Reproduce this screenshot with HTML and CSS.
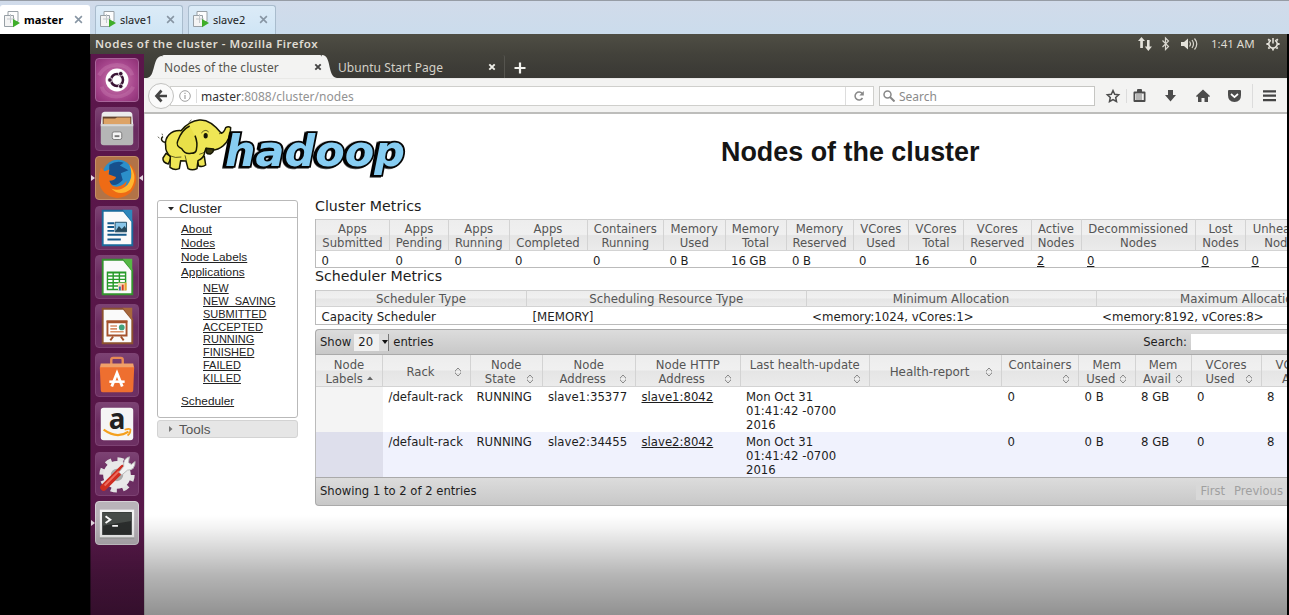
FILE: index.html
```
<!DOCTYPE html>
<html lang="en">
<head>
<meta charset="utf-8">
<title>Nodes of the cluster</title>
<link rel="stylesheet" href="styles.css">
</head>
<body>
<svg class="defs" width="0" height="0">
  <symbol id="vm" viewBox="0 0 18 18"><path d="M5 1.5h10v10H5z" fill="#fdfdfd" stroke="#98a0a6"/><path d="M1.5 5.500h9v11h-9z" fill="#f4f4f4" stroke="#98a0a6"/><path d="M4 9h8M7.500 4v9" stroke="#c3c8cc" fill="none"/><path d="M10 9l7 4-7 4.300z" fill="#3fae2a"/></symbol>
  <symbol id="x" viewBox="0 0 8 8"><path d="M1 1l6 6M7 1L1 7" fill="none" stroke="currentColor" stroke-width="1.400"/></symbol>
  <symbol id="xb" viewBox="0 0 8 8"><path d="M1.300 1.300l5.400 5.400M6.700 1.300L1.300 6.700" fill="none" stroke="currentColor" stroke-width="1.900"/></symbol>
  <symbol id="sort" viewBox="0 0 8 10"><path d="M1.300 4L4 1l2.700 3zM1.300 6L4 9l2.700-3z" fill="#f4f4f4" stroke="#777" stroke-width=".9"/><path d="M2 3.300h4v3.400H2z" fill="#f0f0f0"/></symbol>
</svg>
<div class="vmtabs">
  <div class="vmtab active"><svg class="vmi"><use href="#vm"/></svg><span>master</span><svg class="vmx"><use href="#x"/></svg></div>
  <div class="vmtab second"><svg class="vmi"><use href="#vm"/></svg><span>slave1</span><svg class="vmx"><use href="#x"/></svg></div>
  <div class="vmtab third"><svg class="vmi"><use href="#vm"/></svg><span>slave2</span><svg class="vmx"><use href="#x"/></svg></div>
</div>
<div class="screen">
  <div class="desktop">
    <header class="panel">
      <span class="wintitle">Nodes of the cluster - Mozilla Firefox</span>
      <svg class="tray" width="60" height="18" viewBox="0 0 60 18" fill="#e4e2da"><path d="M3.500 2L7 6H4.900v7H2.200V6H0zM9 5h2.600v6.500H14L10.300 16 6.800 11.500H9z"/><path d="M24.500 5.500l6 6-3 3V3l3 3-6 6" fill="none" stroke="#d8d6ce" stroke-width="1.200"/><path d="M43 7h3l4-3.500v11L46 11h-3z"/><path d="M51.500 6.500q2 2.500 0 5M54 5q3 4 0 8M56.500 3.500q4.500 5.500 0 11" fill="none" stroke="#d8d6ce" stroke-width="1.200"/></svg>
      <span class="clock">1:41 AM</span>
      <svg class="gear" width="14" height="14" viewBox="0 0 14 14" fill="none" stroke="#e4e2da"><path d="M4.900 3.300a4.200 4.200 0 1 0 4.200 0" stroke-width="1.600"/><path d="M7 1v5.500" stroke-width="1.500"/><path d="M2.200 2.200l1.300 1.300M11.800 2.200l-1.300 1.300M.4 7h2M11.600 7h2M2.300 11.700l1.200-1.200M11.700 11.700l-1.200-1.200M7 11.500v2" stroke-width="1.800"/></svg>
    </header>
    <div class="work">
      <nav class="launcher">
        <div class="tile dash"><svg viewBox="0 0 44 44"><path d="M3 17C12 2 34 3 38 17M39 29C33 43 9 43 6 29" stroke="#d18bb9" stroke-width="4" fill="none" opacity=".3"/><circle cx="22" cy="22" r="12" fill="#fff"/><circle cx="22" cy="22" r="6.300" fill="none" stroke="#3b1435" stroke-width="2.600"/><g stroke="#fff" fill="#3b1435" stroke-width=".8"><circle cx="14.600" cy="22" r="2.400"/><circle cx="25.900" cy="15.400" r="2.400"/><circle cx="25.900" cy="28.600" r="2.400"/></g></svg></div>
        <div class="tile"><svg viewBox="0 0 44 44"><path d="M6 6q1-2 3-2h26q2 0 3 2l1 12H5z" fill="#ececec"/><path d="M7 9h30v8H7z" fill="#61412c"/><path d="M8 11h12l2-1h14v9H8z" fill="#dda366"/><path d="M5 17h34v19q0 3-3 3H8q-3 0-3-3z" fill="#b5b6b6"/><path d="M5 17h34v2H5z" fill="#d8d8d8"/><rect x="17" y="25" width="10" height="8" rx="2" fill="#f4f4f4" stroke="#777"/><path d="M19.500 29.500h5" stroke="#777" stroke-width="2"/></svg></div>
        <div class="tile firefox"><svg viewBox="0 0 44 44"><circle cx="23" cy="19" r="16" fill="#2b8fca"/><path d="M14 8q8-5 15-2l-4 3 9 5-8 3 2 7q-8 9-15 3z" fill="#17508d"/><path d="M5 11l4 4 5-2-1 5 8 3q-1 4-7 4 2 7 9 6 6-1 9-6 0 5-3 7 8-3 8-13 1-8-3-13 9 7 8 19-3 17-20 18Q5 41 3 25q0-8 2-14z" fill="#ee6b15"/><path d="M35 8q5 12-2 21-8 8-17 4 9 9 20 1 9-13-1-26z" fill="#ffb52f"/></svg><i class="dot"></i><i class="dot right"></i></div>
        <div class="tile"><svg viewBox="0 0 44 44"><path d="M7 4h22l9 11v25H7z" fill="#fafafa" stroke="#1a6a9c" stroke-width="2"/><path d="M28 3h10v13z" fill="#2e87bb"/><path d="M12 17h7M12 21h7M12 25h7M12 29h20M12 34h14" stroke="#15598a" stroke-width="2"/><path d="M20 16h12v10H20z" fill="#88c5e8" stroke="#234d65"/><path d="M20 26l4-6 3 3 3-3 2 3v3z" fill="#26485a"/></svg></div>
        <div class="tile"><svg viewBox="0 0 44 44"><path d="M7 4h22l9 11v25H7z" fill="#fafafa" stroke="#34932e" stroke-width="2"/><path d="M28 3h10v13z" fill="#56b745"/><path d="M12 17h19v18H12z" fill="#fff" stroke="#279a2a" stroke-width="1.500"/><path d="M12 17.500h19M12 21h19M12 24.500h19M12 28h19M12 31.500h19M18 17v18M24.500 17v18" fill="none" stroke="#279a2a" stroke-width="1.500"/><path d="M23 28h9v8h-9z" fill="#f8d9b5"/><path d="M24 32h2v4h-2z" fill="#336fb5"/><path d="M27 30h2v6h-2z" fill="#d43d28"/><path d="M30 28h2v8h-2z" fill="#e9a12e"/></svg></div>
        <div class="tile"><svg viewBox="0 0 44 44"><path d="M7 4h22l9 11v25H7z" fill="#fafafa" stroke="#8c512f" stroke-width="2"/><path d="M28 3h10v13z" fill="#a7683c"/><path d="M12 18h20v14H12z" fill="#fff" stroke="#a5522d" stroke-width="2"/><path d="M15 22h7M15 25h7M15 28h14" stroke="#d89068" stroke-width="1.600"/><circle cx="27" cy="23.500" r="3" fill="#45a37d"/><path d="M18 33l-3 4M26 33l3 4M11 17h22" stroke="#a5522d" stroke-width="2"/></svg></div>
        <div class="tile"><svg viewBox="0 0 44 44"><path d="M16 11V6q0-2 2-2h8q2 0 2 2v5" fill="none" stroke="#e88a55" stroke-width="2.500"/><path d="M5 10h34l1 5H4z" fill="#f0a06a"/><path d="M4 14h36l-1 24q0 2-2 2H7q-2 0-2-2z" fill="#ee6f30"/><path d="M16.500 34L22 20l5.500 14" fill="none" stroke="#fff" stroke-width="3"/><path d="M14 29h16" stroke="#fff" stroke-width="2.600"/></svg></div>
        <div class="tile"><svg viewBox="0 0 44 44"><rect x="5" y="5" width="34" height="34" rx="3" fill="#f5f5f5"/><text x="22" y="27" class="amz">a</text><path d="M8 28q14 10 26 2" fill="none" stroke="#f4a01e" stroke-width="2.300"/><path d="M30 28q7-2 6 1 0 3-3 5" fill="none" stroke="#f4a01e" stroke-width="1.800"/></svg></div>
        <div class="tile"><svg viewBox="0 0 44 44"><circle cx="22" cy="23" r="16" fill="none" stroke="#e2e2e2" stroke-width="5" stroke-dasharray="6.300 6.266"/><circle cx="22" cy="23" r="10.500" fill="#aaa" stroke="#e9e9e9" stroke-width="8"/><path d="M8 36L28 16" stroke="#cf2d20" stroke-width="7" stroke-linecap="round"/><path d="M9 34L24 19" stroke="#ef6c5e" stroke-width="2"/><path d="M24 20l5-6q-1-8 6-10l-1 6 3 2 4-3q0 9-8 9l-6 5z" fill="#f2f2f2" stroke="#b8b8b8"/></svg></div>
        <div class="tile term"><svg viewBox="0 0 44 44"><rect x="4" y="9" width="36" height="30" fill="#a6a6a6"/><rect x="4" y="8" width="36" height="29" fill="#f3f3f3"/><rect x="6.500" y="10.500" width="31" height="24" fill="#2b2e2d"/><path d="M7 11h30v9L7 25z" fill="#474c49"/><path d="M10 15l5 3.500-5 3.500M17 25h6" fill="none" stroke="#fff" stroke-width="2"/></svg><i class="dot"></i></div>
      </nav>
      <main class="browser">
        <div class="fxtabs">
          <svg class="curve" width="15" height="23" viewBox="0 0 15 23"><path d="M0 23C9 22 5 1 15 1v22z" fill="#f3f3f2"/></svg>
          <div class="fxtab"><span>Nodes of the cluster</span><svg class="close"><use href="#xb"/></svg></div>
          <svg class="curve" width="15" height="23" viewBox="0 0 15 23"><path d="M0 0C10 0 5 22 15 23H0z" fill="#f3f3f2"/></svg>
          <div class="fxtab idle"><span>Ubuntu Start Page</span><svg class="close"><use href="#xb"/></svg></div>
          <svg class="plus" width="12" height="12" viewBox="0 0 12 12"><path d="M6 .5v11M.5 6h11" stroke="#f2f2ee" stroke-width="2.200"/></svg>
        </div>
        <div class="toolbar">
          <div class="back"><svg width="14" height="14" viewBox="0 0 14 14"><path d="M7.500 1.500L2.500 7l5 5.500M3 7h10" fill="none" stroke="#444" stroke-width="2.700"/></svg></div>
          <div class="url"><svg class="info" width="12" height="12" viewBox="0 0 12 12" fill="none" stroke="#a0a0a0"><circle cx="6" cy="6" r="5.300"/><path d="M6 5v4M6 2.800v1.200" stroke-width="1.200"/></svg><i class="sep"></i><span><b>master</b>:8088/cluster/nodes</span><i class="sep reloadsep"></i><svg class="reload" width="12" height="12" viewBox="0 0 12 12"><path d="M9.200 3.500A4 4 0 1 0 9.500 8" fill="none" stroke="#888" stroke-width="1.500"/><path d="M10.800 1v4.500H6.300z" fill="#888"/></svg></div>
          <div class="search"><svg width="12" height="12" viewBox="0 0 12 12" fill="none" stroke="#888" stroke-width="1.500"><circle cx="4.500" cy="4.500" r="3.500"/><path d="M7 7l4.500 4.500" stroke-width="2"/></svg><span>Search</span></div>
          <svg class="tools" width="176" height="28" viewBox="0 0 176 28" fill="#4c4c4c"><path d="M13 8.500l1.700 3.700 4 .5-3 2.800.8 4-3.500-2-3.500 2 .8-4-3-2.800 4-.5z" fill="none" stroke="#4c4c4c" stroke-width="1.500"/><path d="M26.500 7v14M152.500 2v24" stroke="#dcdcdc"/><path d="M34.500 9.500H37V8q0-1 1-1h3q1 0 1 1v1.500h2.500q1 0 1 1V19q0 1-1 1h-10q-1 0-1-1v-8.500q0-1 1-1zm.7 2V18h8.600v-6.500z"/><path d="M37 12v6M39 12v6M41 12v6" stroke="#777"/><path d="M68 8h5v5h3l-5.500 6.500L65 13h3z"/><path d="M103 7.500l7 6.500-1 1.200-1-.9V20h-3.500v-4h-3v4H98v-5.700l-1 .9-1-1.200z"/><path d="M128 9q0-1 1-1h11q1 0 1 1v4q0 7-6.500 7T128 13z"/><path d="M131 12l3.500 3.200L138 12" fill="none" stroke="#fff" stroke-width="1.700"/><path d="M163 9.300h13M163 13.700h13M163 18.100h13" stroke="#444" stroke-width="2.200"/></svg>
        </div>
        <div class="page">
          <div class="banner">
            <svg class="logo" width="280" height="77" viewBox="0 9 840 231">
              <g stroke="#171704" stroke-width="4.500" stroke-linejoin="round" fill="#efe655">
                <path d="M66 102C52 106 44 92 54 86" fill="none"/>
                <path d="M63 136L54 150q-2 13 16 18l9-21zM155 150l6 24q12 4 21-3l-4-26z"/>
                <path d="M108 68C77 66 58 87 62 113c-1 14 5 24 14 32l-1 33q14 10 28 4l4-24 16 1 6 23q13 7 27 0l3-24q18-8 20-25l4-12q25 14 52-8 22-20 22-54-7-5-15 0-5 14-13 17C205 45 185 34 163 36c-23 2-39 13-55 32z"/>
                <path d="M134 54c-19 9-30 28-36 45-5 13 2 18 12 23q10 18 28 14 14 0 16-10 5-22-4-43" fill="#e9df48"/>
                <path d="M184 121q-5 18 12 17 10-5 10-15z" fill="#3d3b12"/>
                <ellipse cx="182" cy="83" rx="4" ry="6" fill="#111"/><path d="M169 75q12-14 22-3M222 78l9-6M132 44l7-9M43 91l-4-5M53 82l-2-5" fill="none" stroke-width="2"/>
                <path d="M77 144q13 7 32 3M124 158l-4-16M163 139q14-2 20-13" fill="none" stroke-width="2"/>
              </g>
              <text class="word" x="240" y="173" textLength="540" lengthAdjust="spacingAndGlyphs">hadoop</text>
            </svg>
            <h1>Nodes of the cluster</h1>
          </div>
          <div class="cols">
            <aside>
              <div class="box">
                <h3><svg width="6" height="4" viewBox="0 0 6 4"><path d="M0 0h6L3 3.500z" fill="#222"/></svg>Cluster</h3>
                <ul>
                  <li><a>About</a></li><li><a>Nodes</a></li><li><a>Node Labels</a></li><li><a>Applications</a></li>
                  <li><ul class="states"><li><a>NEW</a></li><li><a>NEW_SAVING</a></li><li><a>SUBMITTED</a></li><li><a>ACCEPTED</a></li><li><a>RUNNING</a></li><li><a>FINISHED</a></li><li><a>FAILED</a></li><li><a>KILLED</a></li></ul></li>
                  <li><a>Scheduler</a></li>
                </ul>
              </div>
              <div class="box closed"><h3><svg width="6" height="6" viewBox="0 0 6 6"><path d="M1 0v6l3.500-3z" fill="#777"/></svg>Tools</h3></div>
            </aside>
            <section class="content">
              <h2>Cluster Metrics</h2>
              <div class="grid metrics">
                <div class="th">Apps<br>Submitted</div><div class="th">Apps<br>Pending</div><div class="th">Apps<br>Running</div><div class="th">Apps<br>Completed</div><div class="th">Containers<br>Running</div><div class="th">Memory<br>Used</div><div class="th">Memory<br>Total</div><div class="th">Memory<br>Reserved</div><div class="th">VCores<br>Used</div><div class="th">VCores<br>Total</div><div class="th">VCores<br>Reserved</div><div class="th">Active<br>Nodes</div><div class="th">Decommissioned<br>Nodes</div><div class="th">Lost<br>Nodes</div><div class="th">Unhealthy<br>Nodes</div>
                <div class="td">0</div><div class="td">0</div><div class="td">0</div><div class="td">0</div><div class="td">0</div><div class="td">0 B</div><div class="td">16 GB</div><div class="td">0 B</div><div class="td">0</div><div class="td">16</div><div class="td">0</div><div class="td"><a>2</a></div><div class="td"><a>0</a></div><div class="td"><a>0</a></div><div class="td"><a>0</a></div>
              </div>
              <h2 class="sched">Scheduler Metrics</h2>
              <div class="grid scheduler">
                <div class="th">Scheduler Type</div><div class="th">Scheduling Resource Type</div><div class="th">Minimum Allocation</div><div class="th">Maximum Allocation</div>
                <div class="td">Capacity Scheduler</div><div class="td">[MEMORY]</div><div class="td">&lt;memory:1024, vCores:1&gt;</div><div class="td">&lt;memory:8192, vCores:8&gt;</div>
              </div>
              <div class="bar top"><span>Show</span><span class="select">20<i></i></span><span>entries</span><span class="find">Search:</span><span class="field"></span></div>
              <div class="grid nodes">
                <div class="th"><span>Node<br>Labels <svg class="up" viewBox="0 0 6 4"><path d="M0 4h6L3 .5z" fill="#666"/></svg></span></div>
                <div class="th"><span class="off">Rack</span><svg class="sort mid"><use href="#sort"/></svg></div>
                <div class="th"><span>Node<br><span class="off">State</span></span><svg class="sort"><use href="#sort"/></svg></div>
                <div class="th"><span>Node<br><span class="off">Address</span></span><svg class="sort"><use href="#sort"/></svg></div>
                <div class="th"><span>Node HTTP<br><span class="off">Address</span></span><svg class="sort"><use href="#sort"/></svg></div>
                <div class="th"><span>Last health-update<br>&nbsp;</span><svg class="sort"><use href="#sort"/></svg></div>
                <div class="th"><span class="off report">Health-report</span><svg class="sort mid"><use href="#sort"/></svg></div>
                <div class="th"><span>Containers<br>&nbsp;</span><svg class="sort"><use href="#sort"/></svg></div>
                <div class="th"><span>Mem<br><span class="off">Used</span></span><svg class="sort"><use href="#sort"/></svg></div>
                <div class="th"><span>Mem<br><span class="off">Avail</span></span><svg class="sort"><use href="#sort"/></svg></div>
                <div class="th"><span>VCores<br><span class="off">Used</span></span><svg class="sort"><use href="#sort"/></svg></div>
                <div class="th last"><span>VCores<br>Avail</span></div>
                <div class="td lab"></div><div class="td">/default-rack</div><div class="td">RUNNING</div><div class="td">slave1:35377</div><div class="td"><a>slave1:8042</a></div><div class="td">Mon Oct 31<br>01:41:42 -0700<br>2016</div><div class="td"></div><div class="td">0</div><div class="td">0 B</div><div class="td">8 GB</div><div class="td">0</div><div class="td">8</div>
                <div class="td even lab"></div><div class="td even">/default-rack</div><div class="td even">RUNNING</div><div class="td even">slave2:34455</div><div class="td even"><a>slave2:8042</a></div><div class="td even">Mon Oct 31<br>01:41:42 -0700<br>2016</div><div class="td even"></div><div class="td even">0</div><div class="td even">0 B</div><div class="td even">8 GB</div><div class="td even">0</div><div class="td even">8</div>
              </div>
              <div class="bar foot"><span>Showing 1 to 2 of 2 entries</span><span class="pager"><span>First</span><span>Previous</span></span></div>
            </section>
          </div>
        </div>
      </main>
    </div>
  </div>
</div>
<div class="fade"></div>
</body>
</html>
```
FILE: styles.css
```
* { box-sizing: border-box; }
body { margin: 0; width: 1289px; height: 615px; overflow: hidden; background: #000; font-family: "Noto Sans", sans-serif; display: flex; flex-direction: column; position: relative; }
svg { display: block; flex: none; }
.defs { position: absolute; }
h1, h2, h3, ul { margin: 0; padding: 0; list-style: none; font-weight: normal; }
a { text-decoration: underline; }

.vmtabs { height: 34px; flex: none; display: flex; align-items: flex-end; background: linear-gradient(#d1dbea, #cbdcec); border-top: 1px solid #969ca5; }
.vmtab { height: 29px; display: flex; align-items: center; padding: 0 0 2px 3px; font-size: 11px; color: #222; border: 1px solid #a9bccd; border-bottom: 0; border-radius: 3px 3px 0 0; background: linear-gradient(#dcebf7, #cfe5f5); width: 88px; }
.vmtab.active { width: 90px; background: #fff; font-weight: 700; color: #000; border-color: #fff; padding-left: 2px; }
.second { margin-left: 5px; }
.third { margin-left: 5px; }
.vmi { width: 18px; height: 18px; margin-right: 3px; }
.vmx { width: 9px; height: 9px; color: #8795a3; margin-left: auto; margin-right: 7px; }
.active .vmx { margin-right: 6px; }

.screen { flex: 1; min-height: 0; padding: 0 2px 0 90px; }
.desktop { height: 581px; display: flex; flex-direction: column; overflow: hidden; background: #3c3b37; }
.panel { height: 20px; flex: none; display: flex; align-items: center; padding: 0 7px 1px 5px; background: linear-gradient(#4f4e44, #43423b); color: #dfdbd2; }
.wintitle { font-size: 11.500px; font-weight: 600; letter-spacing: .5px; }
.tray { margin-left: auto; }
.clock { font-size: 11.500px; margin-left: 13px; width: 46px; white-space: nowrap; }
.gear { margin-left: 9px; }
.work { display: flex; flex: 1; min-height: 0; }

.launcher { width: 54px; flex: none; background: linear-gradient(#5b164b, #571748 60%, #5b1a4d); border-left: 1px solid #35102d; padding: 4px 0 0 4px; display: flex; flex-direction: column; gap: 5.200px; }
.tile { width: 44px; height: 44px; flex: none; border-radius: 4px; border: 1px solid #7d4273; background: linear-gradient(#7c4273, #6a2b60 50%, #6d3063); position: relative; }
.tile svg { width: 42px; height: 42px; }
.dash { background: radial-gradient(#cf83b2, #a8488e 60%, #8d2f75); border-color: #a8659a; }
.firefox { background: #b27347; border-color: #c49069; }
.term { background: #b9b3b9; border-color: #d6d1d6; }
.amz { font: bold 29px "Open Sans", sans-serif; text-anchor: middle; fill: #222; }
.dot { position: absolute; left: -5px; top: 18px; border: 3px solid transparent; border-left: 4px solid #e6d8e3; border-right: 0; }
.dot.right { left: auto; right: -5px; border-left: 0; border-right: 4px solid #e6d8e3; }

.browser { flex: 1; min-width: 0; display: flex; flex-direction: column; }
.fxtabs { height: 25px; flex: none; display: flex; align-items: flex-end; background: linear-gradient(#43423b, #393834); border-bottom: 1px solid #e9e9e7; padding-left: 3px; }
.fxtab { height: 23px; width: 160px; background: #f3f3f2; display: flex; align-items: center; font-size: 12px; letter-spacing: .06px; color: #56554f; padding: 1px 0 0 2px; white-space: nowrap; border-radius: 2px 2px 0 0; }
.close { width: 8px; height: 8px; margin-left: auto; color: #444; }
.fxtab.idle { background: none; color: #d4d1c8; width: 168px; padding-left: 1px; padding-right: 8px; border-right: 1px solid #55544e; }
.idle .close { color: #f0f0ea; }
.plus { margin: 0 0 4px 9px; }
.toolbar { height: 35px; flex: none; background: #f3f3f2; border-bottom: 2px solid #bdbdbb; display: flex; align-items: center; padding: 1px 0 0 4px; }
.back { width: 26px; height: 26px; border: 1px solid #c2c2c0; border-radius: 50%; background: #fafafa; display: flex; align-items: center; justify-content: center; z-index: 1; }
.url { width: 704px; height: 20px; margin-left: -4px; background: #fff; border: 1px solid #cfcfcc; display: flex; align-items: center; padding-left: 8px; font-size: 12px; letter-spacing: .03px; color: #929292; }
.url b { font-weight: 400; color: #333; }
.sep { width: 1px; height: 14px; background: #ddd; margin: 0 4px 0 5px; }
.reloadsep { margin-left: auto; height: 18px; }
.reload { margin: 0 8px 0 3px; }
.search { width: 216px; height: 20px; margin-left: 5px; background: #fff; border: 1px solid #c6c6c3; display: flex; align-items: center; gap: 4px; padding-left: 3px; font-size: 12px; color: #8b8b8b; }
.tools { margin-left: 5px; }

.page { flex: 1; min-height: 0; background: #fff; border-left: 1px solid #ddd; overflow: hidden; }
.banner { height: 85px; display: flex; }
.logo { margin-top: -3px; }
.word { font: italic bold 129px "DejaVu Sans", sans-serif; fill: #87cdf2; stroke: #050505; stroke-width: 11px; paint-order: stroke; stroke-linejoin: miter; stroke-miterlimit: 2; filter: drop-shadow(-6px 2px 0 #000); }
h1 { font: bold 26.900px/30px "Liberation Sans", sans-serif; color: #151515; margin: 23px 0 0 296px; white-space: nowrap; }
.cols { display: flex; gap: 17px; padding-left: 12px; }
aside { width: 141px; flex: none; font-family: "Liberation Sans", sans-serif; color: #222; display: flex; flex-direction: column; gap: 2px; padding-top: 1px; }
.box { height: 218px; border: 1px solid #b9b9b9; border-radius: 3px; }
.box h3 { font-size: 13.500px; line-height: 15px; height: 17px; display: flex; align-items: center; gap: 5px; padding: 0 0 1px 10px; border-bottom: 1px solid #bbb; }
.box.closed { height: 18px; background: #e6e6e6; border-color: #d3d3d3; color: #555; }
.box.closed h3 { border: 0; height: 16px; padding-bottom: 0; }
.box ul { font-size: 11.800px; line-height: 14.200px; padding: 4px 0 0 23px; }
.box .states { font-size: 11px; line-height: 12.900px; padding: 3px 0 9px 22px; }

.content { flex: 1; min-width: 0; overflow: hidden; font-family: "DejaVu Sans", sans-serif; line-height: 14.200px; color: #1d1d1d; }
h2 { font-size: 14.200px; line-height: 14px; height: 20px; }
h2.sched { height: 22px; line-height: 16px; }
.grid { display: grid; border-left: 1px solid #bbb; white-space: nowrap; width: max-content; }
.th { text-align: center; color: #555; background: linear-gradient(#ededed, #f0f0f0 48%, #e5e5e5 52%, #ebebeb); border-right: 1px solid #d3d3d3; border-top: 1px solid #ccc; border-bottom: 1px solid #d3d3d3; padding-top: 2px; }
.td { padding: 3px 0 0 5.500px; }
.metrics { grid-template-columns: 74px 59px 60.500px 78px 76.500px 61.500px 61px 67px 55.500px 55px 67.500px 50px 114.500px 50px 74px; grid-template-rows: 32px 17px; font-size: 11.650px; }
.metrics .td, .scheduler .td { border-bottom: 1px solid #bbb; }
.scheduler { grid-template-columns: 211px 279.500px 290px 288px; grid-template-rows: 17px 18px; font-size: 11.800px; }
.scheduler .th { padding-top: 1px; }
.bar { height: 26px; display: flex; align-items: center; background: linear-gradient(#dcdcdc, #c8c8c8); border: 1px solid #aaa; border-right: 0; padding-left: 4px; font-size: 11.600px; white-space: nowrap; }
.bar.top { margin-top: 4px; border-radius: 4px 0 0 0; }
.select { width: 35px; height: 17px; margin: 0 4px 0 3px; background: linear-gradient(90deg, #f0f0f0 75%, #ddd 75%); padding-left: 4px; line-height: 17px; display: flex; align-items: center; justify-content: space-between; border-right: 1px solid #777; }
.select i { border: 3px solid transparent; border-top: 4px solid #111; border-bottom: 0; }
.find { margin-left: auto; }
.field { width: 96px; height: 16px; background: #fff; margin-left: 4px; }
.nodes { grid-template-columns: 67px 88px 71.500px 93.500px 104.500px 129.500px 132px 77px 56.500px 56px 70px 70px; grid-template-rows: 32px 44.500px 45.500px; }
.nodes .th { position: relative; display: flex; align-items: center; justify-content: center; border-top: 0; padding: 3px 0 0; font-size: 11.650px; }
.nodes .th .off { padding-right: 12px; }
.nodes .th .report { font-size: 11.900px; }
.nodes .th.last { justify-content: flex-start; padding-left: 14px; }
.sort { position: absolute; right: 8px; bottom: 2px; width: 8px; height: 10px; }
.sort.mid { bottom: 9px; }
.up { display: inline-block; width: 6px; height: 4px; vertical-align: 3px; }
.nodes .td { padding-top: 3px; font-size: 11.700px; }
.even { background: #f0f2fd; }
.lab { background: #f4f4f4; }
.even.lab { background: #dedfec; }
.bar.foot { height: 29px; border-radius: 0 0 0 4px; }
.pager { margin-left: auto; display: flex; gap: 9px; background: #d8d8d8; color: #a0a0a0; padding: 1px 4px 1px 5px; }
.fade { position: absolute; left: 90px; right: 2px; top: 515px; height: 100px; background: linear-gradient(rgba(0,0,0,0), rgba(0,0,0,.06) 15%, rgba(0,0,0,.29) 60%, rgba(0,0,0,.43)); }
```
